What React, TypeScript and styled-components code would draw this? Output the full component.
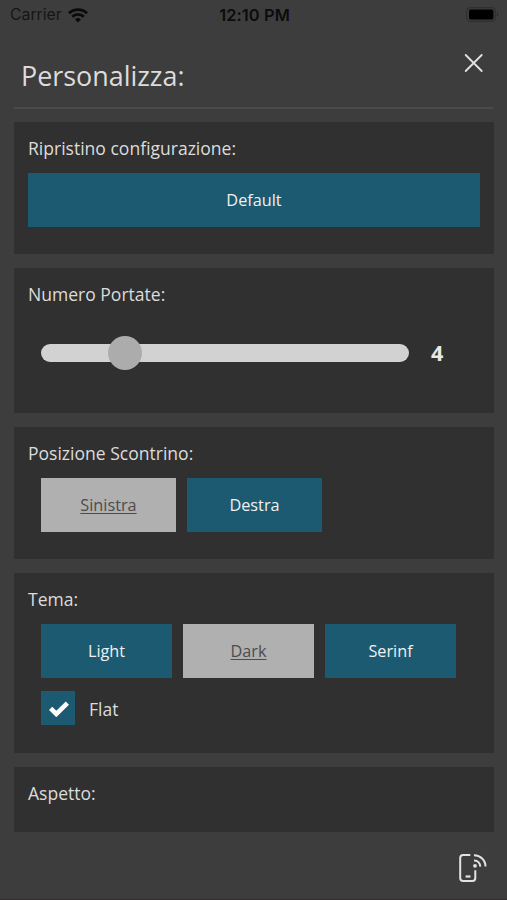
import React, { useState } from "react";
import styled, { createGlobalStyle } from "styled-components";

const GlobalStyle = createGlobalStyle`
  *, *::before, *::after { box-sizing: border-box; }
  html, body { margin: 0; background: #3d3d3d; }
  button { font: inherit; border: 0; padding: 0; cursor: pointer; }
`;

const Screen = styled.div`
  display: flex;
  flex-direction: column;
  width: 507px;
  height: 900px;
  overflow: hidden;
  background: #3d3d3d;
  border-bottom: 1px solid #332d2f;
  color: #dcdcdc;
  font-family: "Open Sans", "Noto Sans", sans-serif;
`;

const StatusBar = styled.div`
  display: grid;
  grid-template-columns: 1fr auto 1fr;
  align-items: center;
  height: 30px;
  padding: 0 8px 0 10px;
  color: #0c0c0c;
  font: 400 15.8px/30px Inter, sans-serif;
`;

const Carrier = styled.div`
  display: flex;
  align-items: center;
  gap: 6px;
  color: #161616;
`;

const Clock = styled.div`
  font-size: 16.4px;
  font-weight: 600;
  letter-spacing: 0.1px;
`;

const BatterySlot = styled.div`
  display: flex;
  justify-content: flex-end;
`;

const Header = styled.header`
  display: flex;
  justify-content: space-between;
  height: 79px;
  margin: 0 14px;
  padding: 0 10px 0 7px;
  border-bottom: 2px solid #4b4b4b;
`;

const Title = styled.h1`
  margin: 28px 0 0;
  font-size: 26.9px;
  line-height: 36px;
  font-weight: 400;
`;

const IconButton = styled.button`
  display: flex;
  align-self: flex-start;
  background: none;
  color: #e2e2e2;
`;

const CloseButton = styled(IconButton)`
  margin-top: 23px;
`;

const Sections = styled.main`
  display: flex;
  flex-direction: column;
  gap: 14px;
  padding: 13px 13.5px 0 14px;
`;

const Panel = styled.section<{ $height: number }>`
  height: ${(p) => p.$height}px;
  padding: 14px 13.5px 0 14px;
  background: #303030;
`;

const Label = styled.h2`
  margin: 0 0 13px;
  font-size: 17.55px;
  line-height: 24px;
  font-weight: 400;
`;

const ButtonRow = styled.div`
  display: flex;
  gap: 11px;
  padding-left: 13px;
`;

const Choice = styled.button<{ $width: string; $selected?: boolean }>`
  width: ${(p) => p.$width};
  height: 54px;
  background: ${(p) => (p.$selected ? "#b0b0b0" : "#1c5a71")};
  color: ${(p) => (p.$selected ? "#4c4c4c" : "#f0f0f0")};
  font-size: 16.25px;
  line-height: 54px;
  text-decoration: ${(p) => (p.$selected ? "underline" : "none")};
  text-underline-offset: 2px;
  text-decoration-thickness: 1px;
`;

const SliderRow = styled.div`
  display: flex;
  align-items: center;
  gap: 22px;
  height: 34px;
  margin-top: 30px;
  padding-left: 13px;
`;

const Slider = styled.input`
  appearance: none;
  width: 368px;
  height: 34px;
  margin: 0;
  background: transparent;
  &::-webkit-slider-runnable-track {
    height: 18px;
    border-radius: 9px;
    background: #d2d2d2;
  }
  &::-webkit-slider-thumb {
    appearance: none;
    width: 34px;
    height: 34px;
    margin-top: -8px;
    border-radius: 50%;
    background: #acacac;
  }
`;

const SliderValue = styled.output`
  font-size: 21.5px;
  font-weight: 700;
  line-height: 34px;
  color: #e8e8e8;
`;

const CheckRow = styled.label`
  display: flex;
  align-items: center;
  gap: 14px;
  margin: 13px 0 0 13px;
  font-size: 17.55px;
  line-height: 34px;
`;

const CheckText = styled.span`
  padding-top: 2px;
  line-height: 32px;
`;

const CheckBox = styled.button`
  display: flex;
  align-items: center;
  justify-content: center;
  width: 34px;
  height: 34px;
  padding: 2px 0 0 1px;
  background: #1c5a71;
`;

const Footer = styled.footer`
  display: flex;
  justify-content: flex-end;
  padding: 21px 19px 0 0;
`;

const WifiIcon = () => (
  <svg width="20" height="15" viewBox="0 0 20 15" fill="none" stroke="#0a0a0a" strokeWidth="2.7">
    <path d="M1 5.3a13 13 0 0 1 18 0" />
    <path d="M4.2 8.7a8.4 8.4 0 0 1 11.6 0" />
    <path d="M10 14.4 7 11.5a4.4 4.4 0 0 1 6 0z" fill="#0a0a0a" stroke="none" />
  </svg>
);

const BatteryIcon = () => (
  <svg width="33" height="17" viewBox="0 0 33 17" fill="none">
    <rect x="0.6" y="0.6" width="28.8" height="13.8" rx="4" stroke="#303030" strokeWidth="1.2" />
    <rect x="3" y="2.6" width="24.4" height="9.8" rx="1.6" fill="#000" />
    <path d="M31 5.2c1.6.6 1.6 4 0 4.6z" fill="#2b2b2b" />
  </svg>
);

const CloseIcon = () => (
  <svg width="19" height="20" viewBox="0 0 19 20" fill="none" stroke="currentColor" strokeWidth="1.8" strokeLinecap="round">
    <path d="M1.7 2 17.7 18M17.7 2 1.7 18" />
  </svg>
);

const CheckIcon = () => (
  <svg width="20" height="16" viewBox="0 0 20 16" fill="none" stroke="#fff" strokeWidth="4.6">
    <path d="M1.6 7.3 7.3 13 18.4 2.2" />
  </svg>
);

const PhoneSignalIcon = () => (
  <svg width="30" height="30" viewBox="0 0 30 30" fill="none" stroke="currentColor" strokeWidth="2">
    <path d="M12.3 1.9H5.2Q2.2 1.9 2.2 4.9V25Q2.2 28 5.2 28H14.3Q17.3 28 17.3 25V17.3" />
    <path d="M7.6 23.5h4.9" strokeWidth="2.2" />
    <circle cx="17" cy="12.8" r="1.9" fill="currentColor" stroke="none" />
    <path d="M16 7.4a6 6 0 0 1 6.200 6.200M16 2.200a11.300 11.300 0 0 1 11.500 11.400" />
  </svg>
);

const themes = ["Light", "Dark", "Serinf"];
const positions = ["Sinistra", "Destra"];

export default function App() {
  const [courses, setCourses] = useState(4);
  const [position, setPosition] = useState("Sinistra");
  const [theme, setTheme] = useState("Dark");
  const [flat, setFlat] = useState(true);

  return (
    <Screen>
      <GlobalStyle />
      <StatusBar>
        <Carrier>Carrier <WifiIcon /></Carrier>
        <Clock>12:10 PM</Clock>
        <BatterySlot><BatteryIcon /></BatterySlot>
      </StatusBar>
      <Header>
        <Title>Personalizza:</Title>
        <CloseButton aria-label="Chiudi"><CloseIcon /></CloseButton>
      </Header>
      <Sections>
        <Panel $height={132}>
          <Label>Ripristino configurazione:</Label>
          <Choice $width="100%">Default</Choice>
        </Panel>
        <Panel $height={145}>
          <Label>Numero Portate:</Label>
          <SliderRow>
            <Slider
              type="range"
              min={1}
              max={16}
              step={1}
              value={courses}
              onChange={(e) => setCourses(Number(e.target.value))}
            />
            <SliderValue>{courses}</SliderValue>
          </SliderRow>
        </Panel>
        <Panel $height={132}>
          <Label>Posizione Scontrino:</Label>
          <ButtonRow>
            {positions.map((name) => (
              <Choice key={name} $width="135px" $selected={name === position} onClick={() => setPosition(name)}>
                {name}
              </Choice>
            ))}
          </ButtonRow>
        </Panel>
        <Panel $height={180}>
          <Label>Tema:</Label>
          <ButtonRow>
            {themes.map((name) => (
              <Choice key={name} $width="131px" $selected={name === theme} onClick={() => setTheme(name)}>
                {name}
              </Choice>
            ))}
          </ButtonRow>
          <CheckRow>
            <CheckBox role="checkbox" aria-checked={flat} aria-label="Flat" onClick={() => setFlat(!flat)}>
              {flat && <CheckIcon />}
            </CheckBox>
            <CheckText>Flat</CheckText>
          </CheckRow>
        </Panel>
        <Panel $height={65}>
          <Label>Aspetto:</Label>
        </Panel>
      </Sections>
      <Footer>
        <IconButton aria-label="Dispositivo"><PhoneSignalIcon /></IconButton>
      </Footer>
    </Screen>
  );
}
